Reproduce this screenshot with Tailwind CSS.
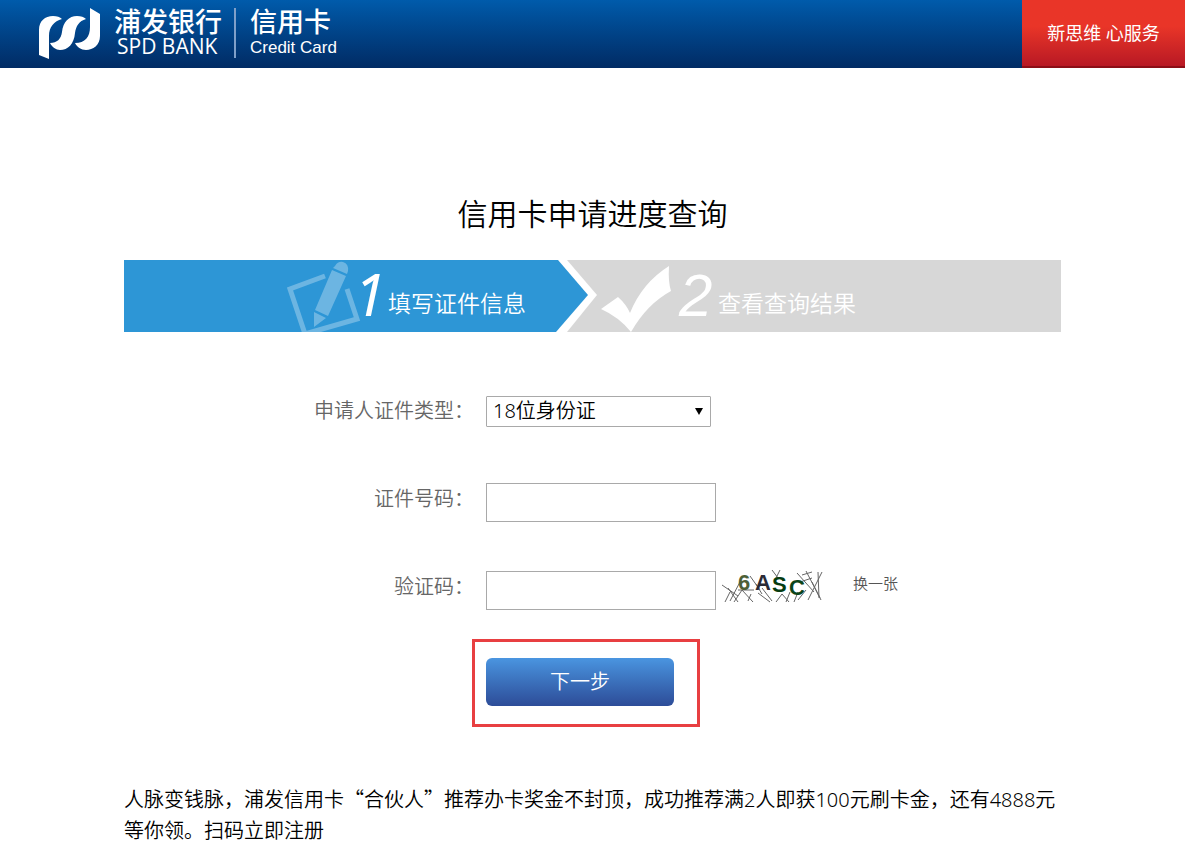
<!DOCTYPE html>
<html lang="zh-CN">
<head>
    <meta charset="UTF-8">
    <meta name="viewport" content="width=device-width, initial-scale=1.0">
    <title>信用卡申请进度查询</title>
    <script src="https://cdn.jsdelivr.net/npm/@tailwindcss/browser@4"></script>
</head>
<body class="bg-white text-black font-['Noto_Sans','Noto_Sans_CJK_SC',sans-serif]">
    <!-- Header -->
    <header class="flex h-[68px] justify-between bg-linear-to-b from-[#005bab] to-[#012b64] text-white">
        <a href="#" class="flex items-center pb-[2px] pl-[38px]">
            <svg class="w-[62px] h-[52px]" viewBox="38 6 62 52" fill="#fff">
                <path d="M39 54V29C39 20 45 15 53 15C57 15 60 16 62 18C54 20 49 26 49 35V58Z"/>
                <path d="M50 42C57 42 61 38 62 31C63 21 69 15 77 15C81 15 84 16 86 18C79 20 76 25 75 32C74 43 68 49 60 49C56 49 52 46 50 42Z"/>
                <path d="M75 42C85 42 90 36 90 26V7L100 13V35C100 44 93 49 86 49C81 49 77 46 75 42Z"/>
            </svg>
            <div class="ml-[14px] flex flex-col">
                <span class="text-[27px] leading-[26px] font-medium">浦发银行</span>
                <span class="pl-[3px] font-['Open_Sans',sans-serif] text-[21px] leading-[22px]">SPD BANK</span>
            </div>
            <div class="ml-3 h-[50px] w-[2px] bg-[#7f9fc9]"></div>
            <div class="ml-[14px] flex flex-col pt-1">
                <span class="text-[27px] leading-[26px] font-medium">信用卡</span>
                <span class="font-['Liberation_Sans',sans-serif] text-[17px] leading-[26px]">Credit Card</span>
            </div>
        </a>
        <div class="flex w-[163px] items-center justify-center border-b-2 border-[#8c0e17] bg-linear-to-b from-[#e93528] from-40% to-[#b81824] text-[18px]">新思维 心服务</div>
    </header>

    <main class="mx-auto max-w-[937px] pt-[123px]">
        <h1 class="text-center text-[30px] leading-[45px] font-[350]">信用卡申请进度查询</h1>

        <!-- Steps -->
        <ol class="mt-6 flex h-[72px] bg-[#d7d7d7] text-white">
            <li class="flex w-[432px] items-center bg-[#2d96d6] pl-[162px]">
                <svg class="h-[72px] w-[76px] shrink-0" viewBox="286 260 76 72" fill="none">
                    <path d="M325 276L290 289L305 334L357 319L347 289" stroke="#6cb5e2" stroke-width="5"/>
                    <path d="M335 266Q338 261 343 262Q349 264 348 271L347 274L333 268ZM332 270L346 276L328 316L315 310ZM314 312L326 318L314 327Z" fill="#6cb5e2"/>
                </svg>
                <span class="-ml-2 w-[34px] shrink-0 pb-1 text-[58px] leading-[68px] italic">1</span>
                <span class="pt-[14px] text-[23px] leading-[34px] font-[350] whitespace-nowrap">填写证件信息</span>
            </li>
            <li class="flex items-center">
                <svg class="h-[72px] w-[42px]" viewBox="0 0 42 72">
                    <path d="M0 0H11L41 35L11 72H0Z" fill="#fff"/>
                    <path d="M0 0H2L32 35L0 72Z" fill="#2d96d6"/>
                </svg>
                <svg class="h-[72px] w-[76px]" viewBox="597 260 76 72" fill="#fff">
                    <path d="M600 309L617 297Q625 304 629 313Q641 283 668 266Q667 282 670 291Q646 304 630 332Q618 317 600 309Z"/>
                </svg>
                <span class="ml-[5px] w-[39px] font-['Liberation_Sans',sans-serif] text-[60px] leading-[72px] italic">2</span>
                <span class="pt-[14px] text-[23px] leading-[34px] font-[350] whitespace-nowrap">查看查询结果</span>
            </li>
        </ol>

        <!-- Query form -->
        <form class="mt-[35px]">
            <div class="flex h-[88px] items-center">
                <label for="idType" class="w-[350px] text-right text-[20px] font-[350] text-[#666]">申请人证件类型：</label>
                <div class="relative ml-3">
                    <select id="idType" name="idType" class="h-[31px] w-[225px] appearance-none rounded-[1px] border border-[#a9a9a9] bg-white pl-[6px] text-[20px] leading-[28px] font-[350]">
                        <option>18位身份证</option>
                    </select>
                    <svg class="pointer-events-none absolute top-3 right-2 h-2 w-2" viewBox="0 0 8 8"><path d="M0 0H8L4 7Z"/></svg>
                </div>
            </div>
            <div class="flex h-[88px] items-center">
                <label for="idNo" class="w-[350px] text-right text-[20px] font-[350] text-[#666]">证件号码：</label>
                <input id="idNo" name="idNo" type="text" class="mt-[6px] ml-3 h-[39px] w-[230px] border border-[#a9a9a9] px-2 text-[20px]">
            </div>
            <div class="flex h-[88px] items-center">
                <label for="captcha" class="w-[350px] text-right text-[20px] font-[350] text-[#666]">验证码：</label>
                <input id="captcha" name="captcha" type="text" class="mt-[6px] ml-3 h-[39px] w-[230px] border border-[#a9a9a9] px-2 text-[20px]">
                <svg class="ml-[6px] h-[34px] w-[101px]" viewBox="0 0 101 34">
                    <g stroke="#666" stroke-width="1" fill="none">
                        <path d="M0 15L16 26M3 32L8 22M8 31L18 12M12 32L20 20M6 18L16 32M20 20L31 32M26 31L29 24M34 14L40 24M36 23L48 32M40 18L50 31M28 6L38 20M50 0L56 8M58 0L54 8M54 32L60 24M60 24L67 32M64 32L68 22M72 32L76 22M75 3L92 22M76 30L84 20M84 1L98 28M86 30L100 2M96 2L97 28M80 5L90 2M78 12L90 8M90 12L99 30M16 20L32 20"/>
                    </g>
                    <g class="font-['Liberation_Sans',sans-serif] text-[22px] font-bold">
                        <text x="16" y="20" fill="#4d6037">6</text>
                        <text x="33" y="20" fill="#2b2b36">A</text>
                        <text x="50" y="22" fill="#063b10">S</text>
                        <text x="67" y="25" fill="#0b4418">C</text>
                    </g>
                </svg>
                <a href="#" class="mb-2 ml-[30px] text-[15px] font-[350] text-[#555]">换一张</a>
            </div>
            <div class="mt-2 ml-[348px] h-[88px] w-[228px] border-[3px] border-[#e83f41] pt-4 pl-[11px]">
                <button type="submit" class="block h-12 w-[188px] rounded-md bg-linear-to-b from-[#4a95e0] to-[#2d4c98] text-[20px] font-[350] text-white">下一步</button>
            </div>
        </form>

        <p class="mt-14 text-[20px] leading-[31px] font-[350]">人脉变钱脉，浦发信用卡<span class="font-['Noto_Sans_CJK_SC',sans-serif]">“合伙人”</span>推荐办卡奖金不封顶，成功推荐满2人即获100元刷卡金，还有4888元等你领。扫码立即注册</p>
    </main>
</body>
</html>
